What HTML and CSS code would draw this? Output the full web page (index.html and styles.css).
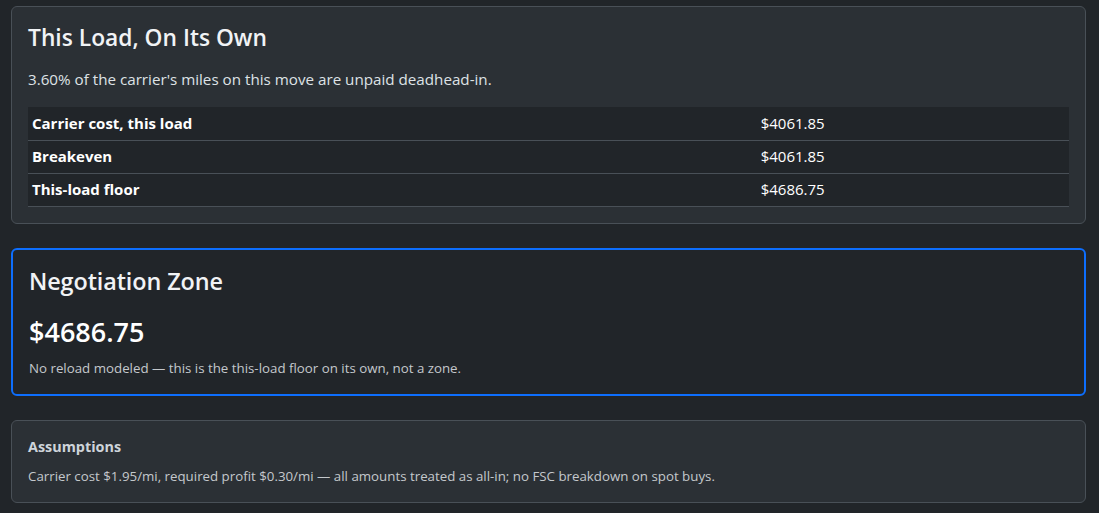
FILE: index.html
```html
<!DOCTYPE html>
<html lang="en">
<head>
<meta charset="utf-8">
<title>Load</title>
<link rel="stylesheet" href="styles.css">
</head>
<body>
<main class="page">
  <section class="card card-tertiary">
    <div class="card-body">
      <h4 class="card-title mb-3">This Load, On Its Own</h4>
      <p class="lead-line">3.60% of the carrier's miles on this move are unpaid deadhead-in.</p>
      <table class="table">
        <tbody>
          <tr><th>Carrier cost, this load</th><td>$4061.85</td></tr>
          <tr><th>Breakeven</th><td>$4061.85</td></tr>
          <tr><th>This-load floor</th><td>$4686.75</td></tr>
        </tbody>
      </table>
    </div>
  </section>

  <section class="card card-primary">
    <div class="card-body">
      <h4 class="card-title zone-title">Negotiation Zone</h4>
      <div class="zone-value">$4686.75</div>
      <div class="small-note">No reload modeled — this is the this-load floor on its own, not a zone.</div>
    </div>
  </section>

  <section class="card card-tertiary">
    <div class="card-body">
      <h6 class="assume-title">Assumptions</h6>
      <div class="small-note">Carrier cost $1.95/mi, required profit $0.30/mi — all amounts treated as all-in; no FSC breakdown on spot buys.</div>
    </div>
  </section>
</main>
</body>
</html>
```

FILE: styles.css
```css
* { box-sizing: border-box; }
html, body {
  margin: 0;
  background: #212529;
  color: #dee2e6;
  font-family: "Open Sans", "Noto Sans", sans-serif;
  font-size: 16px;
  line-height: 1.5;
}
.page {
  padding: 6px 13px 0 11px;
  display: flex;
  flex-direction: column;
  gap: 24px;
}
.card {
  border-radius: 6px;
}
.card-tertiary {
  background: #2b3035;
  border: 1px solid #495057;
}
.card-primary {
  background: #212529;
  border: 2px solid #0d6efd;
}
.card-body {
  padding: 16px;
}
.card-title {
  margin: 0 0 8px 0;
  font-size: 22.8px;
  font-weight: 600;
  line-height: 30px;
  color: #f1f3f5;
}
.mb-3 { margin-bottom: 14px; }
.lead-line {
  margin: 0 0 16px 0;
  font-size: 15.2px;
  line-height: 24px;
}
.table {
  width: 100%;
  border-collapse: collapse;
  background: #212529;
  color: #fff;
  font-size: 15px;
}
.table th, .table td {
  padding: 4px;
  height: 33px;
  border-bottom: 1px solid #495057;
  text-align: left;
  vertical-align: middle;
}
.table th {
  width: 70%;
  font-weight: 700;
}
.table td { font-weight: 400; }
.zone-title {
  font-size: 23.4px;
  margin-bottom: 16px;
  letter-spacing: -0.1px;
}
.zone-value {
  font-size: 27px;
  font-weight: 600;
  line-height: 40px;
  color: #fff;
  margin-bottom: 6px;
}
.small-note {
  font-size: 13.3px;
  line-height: 20px;
  color: #c4c8cc;
}
.assume-title {
  margin: 0 0 9px 0;
  font-size: 14.4px;
  font-weight: 700;
  line-height: 20px;
  color: #ced4da;
}
```
